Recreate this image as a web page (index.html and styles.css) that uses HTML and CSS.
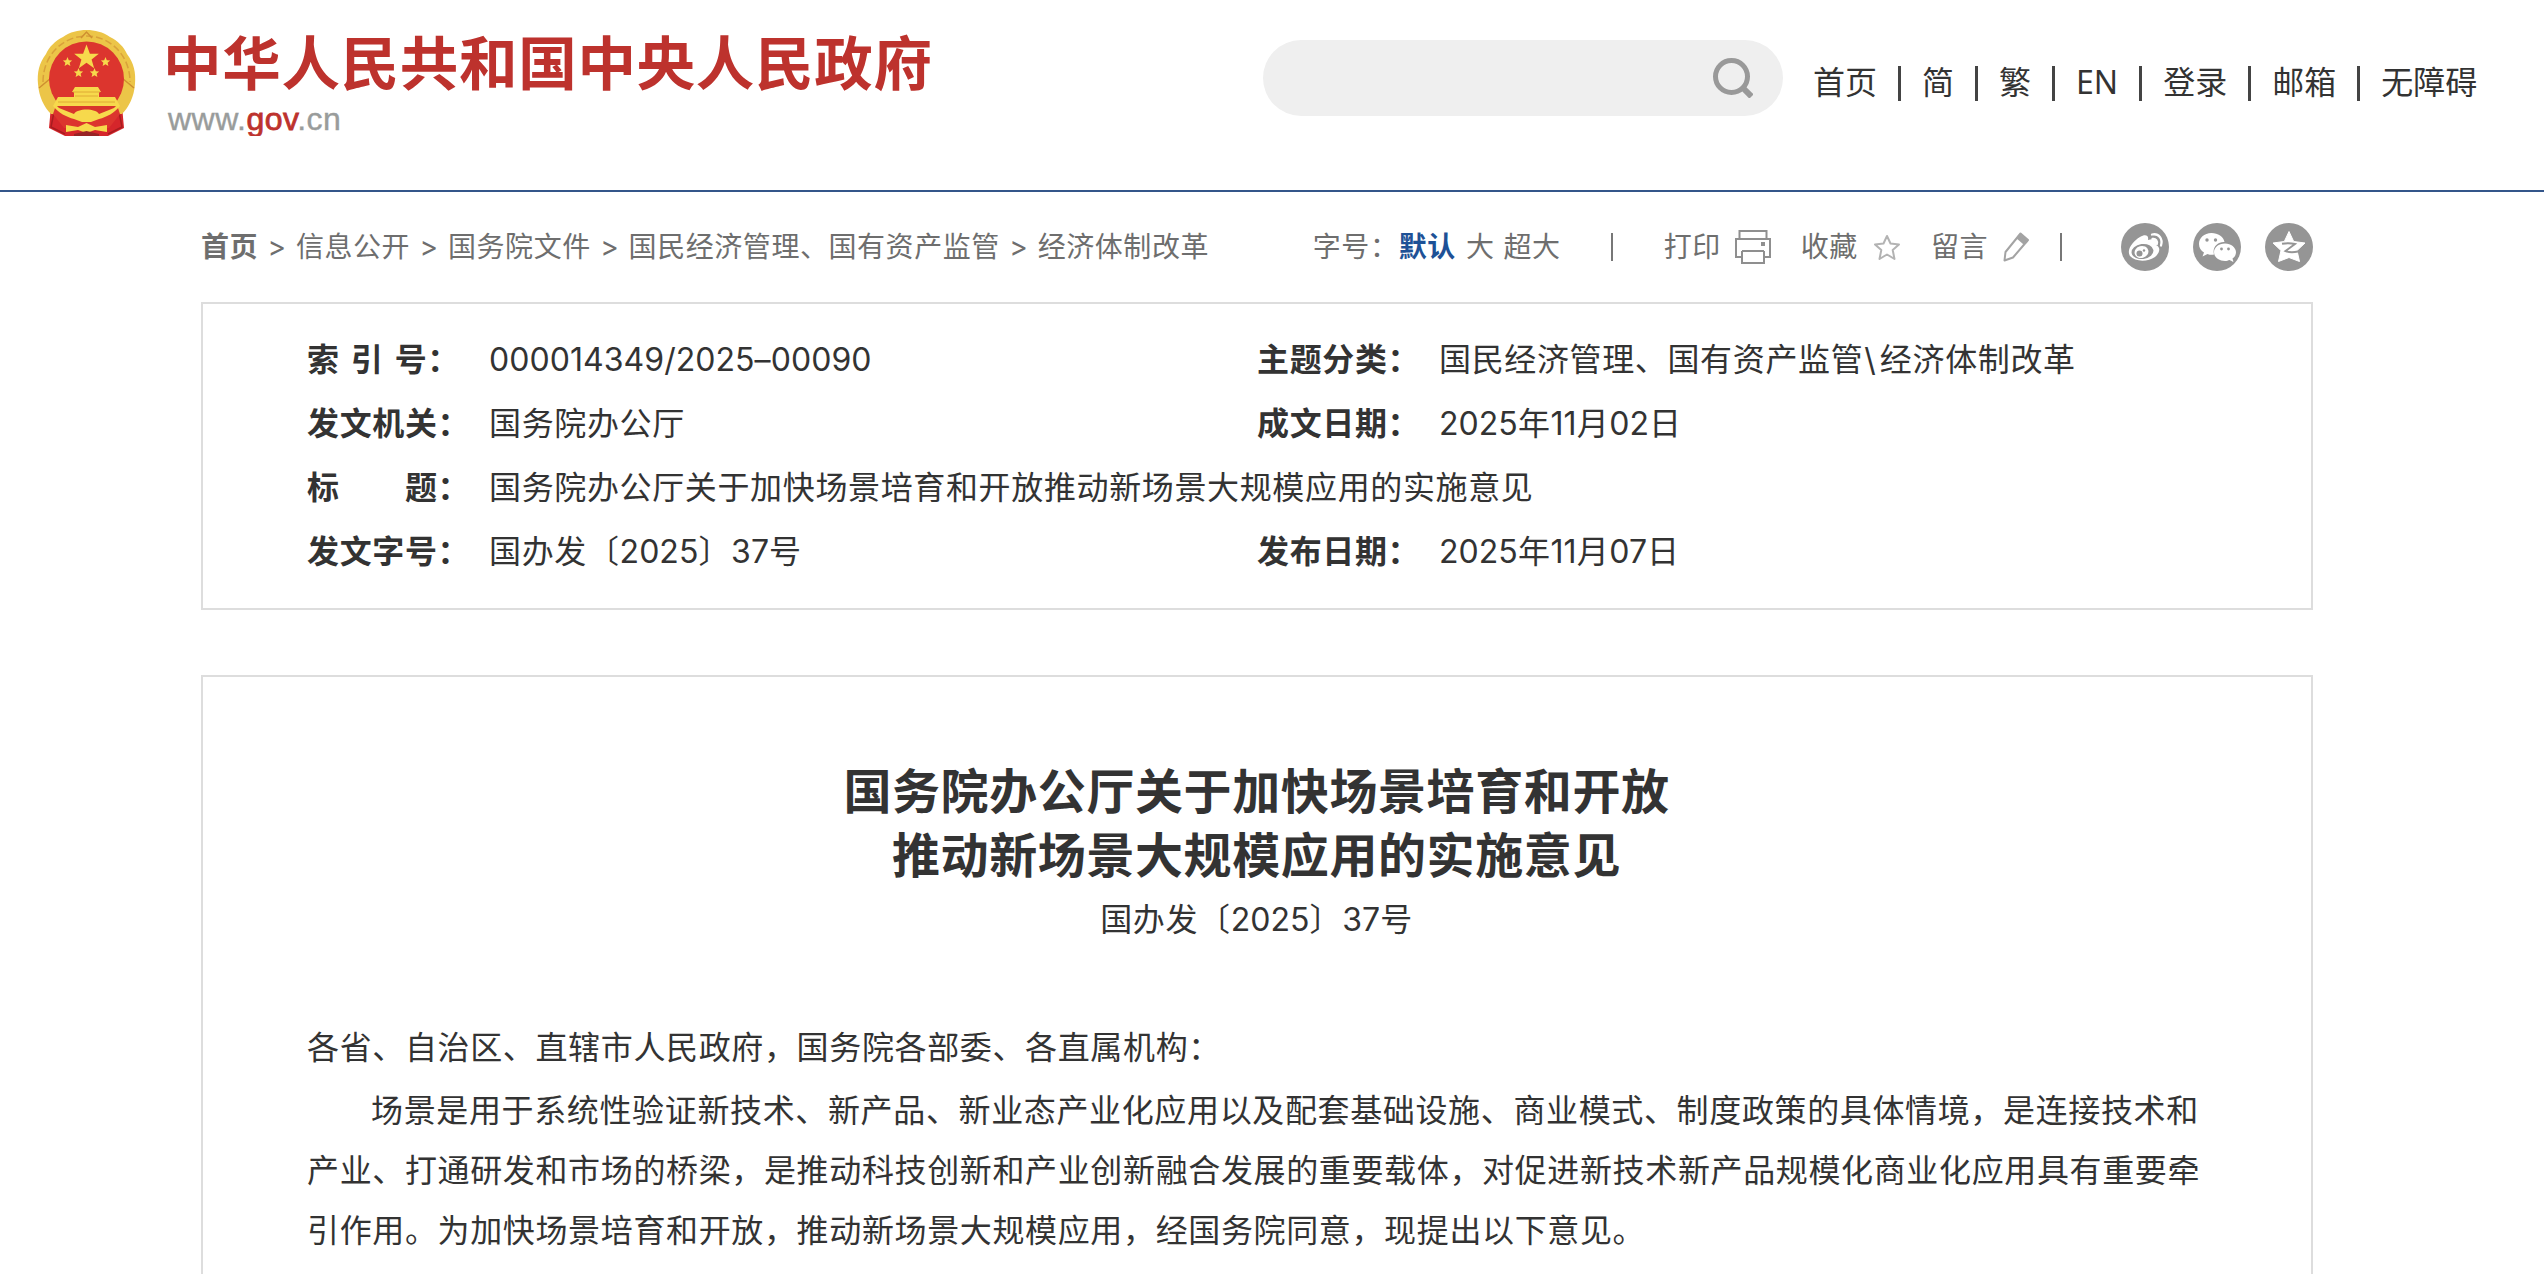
FILE: index.html
```html
<!DOCTYPE html>
<html lang="zh-CN">
<head>
<meta charset="utf-8">
<title>国务院办公厅关于加快场景培育和开放推动新场景大规模应用的实施意见</title>
<link rel="stylesheet" href="styles.css">
</head>
<body>
<header class="header">
  <a class="logo">
    <svg class="emblem" viewBox="0 0 99 106">
      <path d="M14 76 L12 98 L28 106 H71 L87 98 L85 76Z" fill="#d5262b"/>
      <path d="M17 82 L14 97 L28 104 M82 82 L85 97 L71 104" fill="none" stroke="#a81c20" stroke-width="1.5"/>
      <path d="M49.500 0 C58 0 66 2 73 7 C81 11 87 17 90 24 C97 33 99 43 98 54 C97 67 92 77 85 84 L14 84 C7 77 2 67 1 54 C0 43 2 33 9 24 C12 17 18 11 26 7 C33 2 41 0 49.500 0Z" fill="#ecc548"/>
      <path d="M6 52 C6 25 26 6 49.500 6 C73 6 93 25 93 52" fill="none" stroke="#d9a13a" stroke-width="1.500" stroke-dasharray="7 3"/>
      <path d="M2 58 L14 48 M97 58 L85 48 M44 8 L49.500 2 L55 8" fill="none" stroke="#cf8f30" stroke-width="1.500"/>
      <circle cx="49.500" cy="49" r="37.500" fill="#dc352e"/>
      <path d="M20 72 L27 83 H72 L79 72 L83 84 L72 98 H27 L16 84Z" fill="#dc352e"/>
      <g fill="#f7d94c">
        <path d="M49.500 14 L53.500 25 L64 25 L55.500 31.500 L58.500 42 L49.500 35.500 L40.500 42 L43.500 31.500 L35 25 L45.500 25Z" transform="translate(0 -1) translate(49.500 24) scale(.85) translate(-49.500 -24)"/>
        <path d="M30.500 27 l1.300 3.300 3.300 .2 -2.500 2.200 .8 3.400 -2.900-1.800 -2.900 1.800 .8-3.400 -2.500-2.200 3.300-.2Z"/>
        <path d="M68.500 27 l1.300 3.300 3.300 .2 -2.500 2.200 .8 3.400 -2.900-1.800 -2.900 1.800 .8-3.400 -2.500-2.200 3.300-.2Z"/>
        <path d="M41.500 38 l1.300 3.300 3.300 .2 -2.500 2.200 .8 3.400 -2.900-1.800 -2.900 1.800 .8-3.400 -2.500-2.200 3.300-.2Z"/>
        <path d="M57.500 38 l1.300 3.300 3.300 .2 -2.500 2.200 .8 3.400 -2.900-1.800 -2.900 1.800 .8-3.400 -2.500-2.200 3.300-.2Z"/>
        <path d="M38 57 H61 L64 62 H62 V67 H78 L83 76 C77 83 70 87 62 89 L54 92 H45 L37 89 C29 87 22 83 16 76 L21 67 H37 V62 H35Z"/>
        <path d="M29 95 L41 97 L49.500 93 L58 97 L70 95 V102 L58 100 L49.500 103 L41 100 L29 102Z"/>
      </g>
      <path d="M20 76 H79 L77 78 L62 84 C59 78 40 78 37 84 L22 78Z" fill="#d8352c"/>
      <path d="M39 87 C40 78 59 78 60 87 L54 91 H45Z" fill="#f7d94c"/>
      <path d="M36 62 H63 M21 72 H78 M38 66 H61" stroke="#dfaa35" stroke-width="1" fill="none"/>
      <path d="M37 104 L49.500 101 L62 104 V106 H37Z" fill="#982425"/>
    </svg>
    <span class="logo-text">
      <span class="logo-name">中华人民共和国中央人民政府</span>
      <span class="logo-url">www.<b>gov</b>.cn</span>
    </span>
  </a>
  <div class="search">
    <svg class="search-icon" viewBox="0 0 40 40" fill="none" stroke="#999">
      <circle cx="18.500" cy="18.500" r="16" stroke-width="5"/>
      <path d="M30 30 L38.500 38.500" stroke-width="6"/>
    </svg>
  </div>
  <nav class="top-nav">
    <a>首页</a><a>简</a><a>繁</a><a>EN</a><a>登录</a><a>邮箱</a><a>无障碍</a>
  </nav>
</header>

<main class="page">
  <div class="bar">
    <div class="crumbs">
      <b>首页</b><i>&gt;</i><a>信息公开</a><i>&gt;</i><a>国务院文件</a><i>&gt;</i><a>国民经济管理、国有资产监管</a><i>&gt;</i><a>经济体制改革</a>
    </div>
    <div class="tools">
      <span class="size-label">字号：</span><b class="size-on">默认</b><span class="size-l">大</span><span>超大</span>
      <span class="rule rule-a"></span>
      <span>打印</span>
      <svg class="i-print" viewBox="0 0 36 34" fill="none" stroke="#8f8f8f" stroke-width="2">
        <path d="M4.500 9 V1 H31.500 V9 M6 27 H1 V9 H35 V27 H30 M7 21 H29 M7 21 V33 H29 V21"/>
        <rect x="26" y="12" width="4" height="4" fill="#8f8f8f" stroke="none"/>
      </svg>
      <span>收藏</span>
      <svg class="i-star" viewBox="0 0 26 26" fill="none" stroke="#b3b3b3" stroke-width="2" stroke-linejoin="round">
        <path d="M13 2 L16.500 9.500 L25 10.500 L18.700 16 L20.500 25 L13 20.500 L5.500 25 L7.300 16 L1 10.500 L9.500 9.500Z"/>
      </svg>
      <span>留言</span>
      <svg class="i-pen" viewBox="0 0 26 30" fill="none" stroke="#a3a3a3" stroke-width="2" stroke-linejoin="round">
        <path d="M1.500 28.500 L2.500 20 L17.500 1.500 L25 8 L10 25.500Z M14 5.500 L21.500 12"/>
        <path d="M17 3 L24 9 L22 11 L15 5Z" fill="#a3a3a3"/>
      </svg>
      <span class="rule rule-b"></span>
      <span class="share">
        <svg viewBox="0 0 48 48"><circle cx="24" cy="24" r="24" fill="#959595"/>
          <path d="M19 14 C24 11 28 12 27 17 C33 15 37 17 35 22 C40 24 39 30 34 34 C27 39 14 39 9 33 C5 27 12 18 19 14Z" fill="#fff"/>
          <ellipse cx="21.500" cy="28.500" rx="11" ry="7.500" fill="#959595" transform="rotate(-8 21.500 28.500)"/>
          <ellipse cx="20.500" cy="29" rx="7" ry="6" fill="#fff" transform="rotate(-15 20.500 29)"/>
          <circle cx="18.500" cy="30.500" r="3" fill="#959595"/><circle cx="23" cy="27.500" r="1.200" fill="#959595"/>
          <path d="M31 11.500 C38 10 42 16 40 22.500 M31.500 16 C35 15.500 36.500 18 35.800 21" fill="none" stroke="#fff" stroke-width="2.300" stroke-linecap="round"/>
        </svg>
        <svg viewBox="0 0 48 48"><circle cx="24" cy="24" r="24" fill="#959595"/>
          <path d="M18.500 10 C11 10 6 15 6 21 C6 25 8 27.500 11 29.500 L9.500 33.500 L14.500 31 C17 32 19 32 21 31.500 C19 24 25 18.500 31.500 19 C30.500 13.500 25 10 18.500 10Z" fill="#fff"/>
          <path d="M32 20.500 C25.500 20.500 21 24.500 21 29.300 C21 34 26 38 32 38 C34 38 35 37.500 36.500 37 L40.500 39 L39.500 35.500 C42 34 43 31.500 43 29.300 C43 24.500 38 20.500 32 20.500Z" fill="#fff"/>
          <g fill="#959595"><circle cx="14" cy="17" r="1.700"/><circle cx="22.500" cy="17" r="1.700"/><circle cx="28.500" cy="26" r="1.400"/><circle cx="35.500" cy="26" r="1.400"/></g>
        </svg>
        <svg viewBox="0 0 48 48"><circle cx="24" cy="24" r="24" fill="#959595"/>
          <path d="M24 8.500 L28.700 18.500 L40 20 L32 27.500 L34.500 38.500 L24 34.500 L13.500 38.500 L16 27.500 L8 20 L19.300 18.500Z" fill="#fff" stroke="#fff" stroke-linejoin="round"/>
          <path d="M17 20.800 C21 20 26 20 30 21 L20.500 28 C24 29.500 28.500 29.500 33 28.500" fill="none" stroke="#959595" stroke-width="2"/>
        </svg>
      </span>
    </div>
  </div>

  <section class="meta">
    <b class="spaced">索 引 号：</b><span class="num">000014349/2025–00090</span><b>主题分类：</b><span>国民经济管理、国有资产监管<span class="slash">\</span>经济体制改革</span>
    <b>发文机关：</b><span>国务院办公厅</span><b>成文日期：</b><span><span class="num">2025</span>年<span class="num">11</span>月<span class="num">02</span>日</span>
    <b>标　　题：</b><span class="wide">国务院办公厅关于加快场景培育和开放推动新场景大规模应用的实施意见</span>
    <b>发文字号：</b><span>国办发〔<span class="num">2025</span>〕<span class="num">37</span>号</span><b>发布日期：</b><span><span class="num">2025</span>年<span class="num">11</span>月<span class="num">07</span>日</span>
  </section>

  <article class="doc">
    <h1>国务院办公厅关于加快场景培育和开放<br>推动新场景大规模应用的实施意见</h1>
    <p class="doc-no">国办发〔<span class="num">2025</span>〕<span class="num">37</span>号</p>
    <p class="addressee">各省、自治区、直辖市人民政府，国务院各部委、各直属机构：</p>
    <p class="para">场景是用于系统性验证新技术、新产品、新业态产业化应用以及配套基础设施、商业模式、制度政策的具体情境，是连接技术和产业、打通研发和市场的桥梁，是推动科技创新和产业创新融合发展的重要载体，对促进新技术新产品规模化商业化应用具有重要牵引作用。为加快场景培育和开放，推动新场景大规模应用，经国务院同意，现提出以下意见。</p>
  </article>
</main>
</body>
</html>
```

FILE: styles.css
```css
* { box-sizing: border-box; }
body {
  margin: 0;
  background: #fff;
  color: #333;
  font: 32px/64px Inter, "Noto Sans CJK SC", sans-serif;
  letter-spacing: .64px;
  text-spacing-trim: space-all;
}
b { font-weight: 700; }
i { font-style: normal; }

.header {
  display: flex;
  align-items: flex-start;
  height: 192px;
  padding-left: 37px;
  border-bottom: 2px solid #34568a;
}
.logo {
  display: flex;
  width: 1226px;
  height: 136px;
  padding-top: 30px;
  overflow: hidden;
}
.emblem { width: 99px; height: 106px; }
.logo-text { display: flex; flex-direction: column; padding-left: 28px; }
.logo-name {
  height: 68px;
  margin-left: -1px;
  font-size: 58.500px;
  line-height: 68px;
  font-weight: 700;
  letter-spacing: .7px;
  color: #bd322d;
  white-space: nowrap;
}
.logo-url {
  margin: 3px 0 0 4px;
  font: 32px/36px "Liberation Sans", sans-serif;
  letter-spacing: .5px;
  color: #999c9b;
  -webkit-text-stroke: .4px #999c9b;
}
.logo-url b { font-weight: 400; color: #bd322d; -webkit-text-stroke: .8px #bd322d; }

.search {
  display: flex;
  justify-content: flex-end;
  width: 520px;
  height: 76px;
  margin-top: 40px;
  padding: 18px 30px;
  border-radius: 38px;
  background: #efefef;
}
.search-icon { width: 40px; height: 40px; }

.top-nav {
  display: flex;
  align-items: center;
  height: 36px;
  margin: 64px 0 0 30px;
  font-family: "Noto Sans", "Noto Sans CJK SC", sans-serif;
  letter-spacing: 0;
  line-height: 36px;
}
.top-nav a + a { display: flex; align-items: center; }
.top-nav a + a::before {
  content: "";
  width: 3px;
  height: 35px;
  margin: 2px 21px 0;
  background: #444;
}

.page { width: 2112px; margin-left: 201px; }
.bar {
  display: flex;
  justify-content: space-between;
  align-items: center;
  height: 110px;
  font-size: 28px;
  letter-spacing: .56px;
  color: #6e6e6e;
}
.crumbs, .tools { display: flex; align-items: center; white-space: nowrap; }
.crumbs i { width: 37.800px; text-align: center; }
.size-label { width: 86px; }
.size-on { margin-right: 10px; color: #1e5196; }
.size-l { margin-right: 9px; }
.rule { width: 2px; height: 28px; background: #777; }
.rule-a { margin: 0 51px 0 50px; }
.rule-b { margin-left: 31px; }
.i-print { width: 36px; height: 34px; margin: 0 30px 0 14px; }
.i-star { width: 26px; height: 26px; margin: 0 31px 0 16px; }
.i-pen { width: 26px; height: 30px; margin-left: 15px; }
.share { display: flex; gap: 24px; margin-left: 59px; }
.share svg { width: 48px; height: 48px; }

.meta {
  display: grid;
  grid-template-columns: 182px 768px 182px 1fr;
  grid-auto-rows: 64px;
  height: 308px;
  padding: 24px 0 0 104px;
  border: 2px solid #ddd;
  white-space: nowrap;
}
.wide { grid-column: span 3; }
.spaced { word-spacing: 3px; }
.num { letter-spacing: .05px; }
.slash { letter-spacing: 4px; margin-left: 1px; }

.doc {
  height: 599px;
  margin-top: 65px;
  padding: 83px 105px 0 104px;
  border: 2px solid #ddd;
  border-bottom: 0;
  overflow: hidden;
}
h1, p { margin: 0; }
h1 {
  font-size: 48px;
  line-height: 64px;
  letter-spacing: .6px;
  font-weight: 700;
  text-align: center;
}
.doc-no { text-align: center; }
.addressee { margin-top: 64px; }
.para { margin-top: 1px; text-indent: 2em; line-height: 60px; }
```
